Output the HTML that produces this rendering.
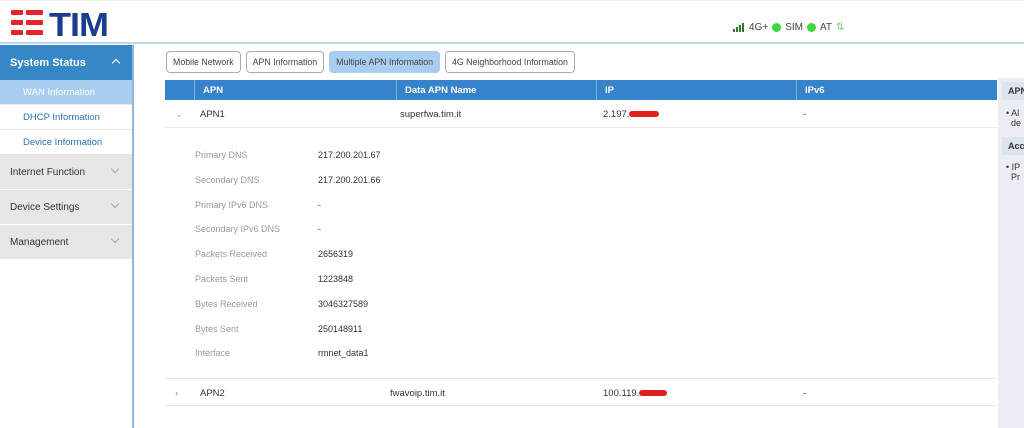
<!DOCTYPE html>
<html><head><meta charset="utf-8"><style>
*{margin:0;padding:0;box-sizing:border-box}
body{width:1024px;height:428px;overflow:hidden;background:#fff;font-family:"Liberation Sans",sans-serif;font-size:9px;color:#333;position:relative}
.hdr{position:absolute;left:0;top:0;width:1024px;height:44px;border-bottom:2px solid #c6d6e2;border-top:1px solid #eee}
.logo{position:absolute;left:11px;top:9px}
.tim{position:absolute;left:49px;top:3px;font-size:36px;font-weight:bold;color:#1b3d8f;letter-spacing:-1px;transform:scaleY(0.92)}
.st{position:absolute;left:733px;top:21px;font-size:10px;color:#444;display:flex;align-items:center;gap:4px}
.dot{width:9px;height:9px;border-radius:50%;background:#3fd63f;display:inline-block}
.side{position:absolute;left:0;top:45px;width:134px;height:383px;border-right:2px solid #8fb6dd}
.ss{height:35px;background:#3687c8;color:#fff;font-size:11px;font-weight:bold;padding:12px 10px;position:relative}
.sub{height:25px;padding:7px 23px;color:#2a6fb3;font-size:9.5px;border-bottom:1px solid #e6e6e6}
.sub.a{background:#a9cdf0;color:#fff}
.grp{height:34px;background:#e6e6e6;margin-bottom:1px;padding:12px 10px;font-size:10px;color:#333;position:relative}
.chev{position:absolute;right:14px;top:11px;width:6px;height:6px;border-right:1px solid #9ab;border-bottom:1px solid #9ab;transform:rotate(45deg)}
.tabs{position:absolute;left:166px;top:51px;display:flex;gap:5px}
.tab{height:22px;border:1px solid #aab;border-radius:4px;padding:0 6px;line-height:20px;font-size:8.8px;color:#444;background:#fff;white-space:nowrap}
.tab.a{background:#a9cdf0;border-color:#a9cdf0}
.th{position:absolute;left:165px;top:80px;width:832px;height:20px;background:#3783cb;color:#fff;font-weight:bold;font-size:9.5px}
.th span,.r span{position:absolute;top:5px;white-space:nowrap}
.th i{position:absolute;top:0;width:1px;height:20px;background:#7fb0e0}
.r{position:absolute;left:165px;width:832px;height:28px;border-bottom:1px solid #e6e6e6;font-size:9.5px}
.r span{top:9px}
.det{position:absolute;left:195px;font-size:9px;width:300px}
.det div{height:24.8px;position:relative}
.det b{font-weight:normal;color:#999;position:absolute;left:0;white-space:nowrap}
.det em{font-style:normal;color:#333;position:absolute;left:123px;white-space:nowrap}
.red{display:inline-block;width:30px;height:6px;background:#e02020;border-radius:3px;vertical-align:middle}
.rp{position:absolute;left:998px;top:78px;width:26px;height:350px;background:#eaeef4;font-size:9px;overflow:hidden}
</style></head><body>
<div class="hdr">
<svg class="logo" width="32" height="26"><g fill="#e4232b"><rect x="0" y="0" width="12" height="5" rx="1"/><rect x="15" y="0" width="17" height="5" rx="1"/><rect x="0" y="10" width="12" height="5" rx="1"/><rect x="15" y="10" width="17" height="5" rx="1"/><rect x="0" y="20" width="12" height="5" rx="1"/><rect x="15" y="20" width="17" height="5" rx="1"/></g></svg>
<div class="tim">TIM</div>
<div class="st"><svg width="12" height="9"><rect x="0" y="6" width="2" height="3" fill="#2a7a2a"/><rect x="3" y="4" width="2" height="5" fill="#2a7a2a"/><rect x="6" y="2" width="2" height="7" fill="#2a7a2a"/><rect x="9" y="0" width="2" height="9" fill="#2a7a2a"/></svg>4G+ <span class="dot"></span>SIM <span class="dot"></span>AT <span style="color:#7c7;font-size:10px">⇅</span></div>
</div>
<div class="side">
<div class="ss">System Status<span style="position:absolute;right:13px;top:15px;width:6px;height:6px;border-left:1.5px solid #fff;border-top:1.5px solid #fff;transform:rotate(45deg)"></span></div>
<div class="sub a">WAN Information</div>
<div class="sub">DHCP Information</div>
<div class="sub">Device Information</div>
<div class="grp">Internet Function<span class="chev"></span></div>
<div class="grp">Device Settings<span class="chev"></span></div>
<div class="grp">Management<span class="chev"></span></div>
</div>
<div class="tabs"><div class="tab">Mobile Network</div><div class="tab">APN Information</div><div class="tab a">Multiple APN Information</div><div class="tab">4G Neighborhood Information</div></div>
<div class="th"><i style="left:29px"></i><span style="left:38px">APN</span><i style="left:231px"></i><span style="left:240px">Data APN Name</span><i style="left:431px"></i><span style="left:440px">IP</span><i style="left:631px"></i><span style="left:640px">IPv6</span></div>
<div class="r" style="top:100px"><span style="left:10px;color:#aaa">⌄</span><span style="left:35px">APN1</span><span style="left:235px">superfwa.tim.it</span><span style="left:438px">2.197.<i class="red"></i></span><span style="left:638px">-</span></div>
<div class="det" style="top:150px">
<div><b>Primary DNS</b><em>217.200.201.67</em></div>
<div><b>Secondary DNS</b><em>217.200.201.66</em></div>
<div><b>Primary IPv6 DNS</b><em>-</em></div>
<div><b>Secondary IPv6 DNS</b><em>-</em></div>
<div><b>Packets Received</b><em>2656319</em></div>
<div><b>Packets Sent</b><em>1223848</em></div>
<div><b>Bytes Received</b><em>3046327589</em></div>
<div><b>Bytes Sent</b><em>250148911</em></div>
<div><b>Interface</b><em>rmnet_data1</em></div>
</div>
<div class="r" style="top:378px;border-top:1px solid #e6e6e6"><span style="left:10px;color:#888">›</span><span style="left:35px">APN2</span><span style="left:225px">fwavoip.tim.it</span><span style="left:438px">100.119.<i class="red" style="width:28px"></i></span><span style="left:638px">-</span></div>
<div class="rp">
<div style="position:absolute;left:4px;top:4px;width:30px;height:18px;background:#dde4ee;font-weight:bold;padding:4px 6px">APN</div>
<div style="position:absolute;left:8px;top:30px;white-space:nowrap">• Al<br>&nbsp;&nbsp;de</div>
<div style="position:absolute;left:4px;top:59px;width:30px;height:18px;background:#dde4ee;font-weight:bold;padding:4px 6px">Acc</div>
<div style="position:absolute;left:8px;top:84px;white-space:nowrap">• IP<br>&nbsp;&nbsp;Pr</div>
</div>
</body></html>
